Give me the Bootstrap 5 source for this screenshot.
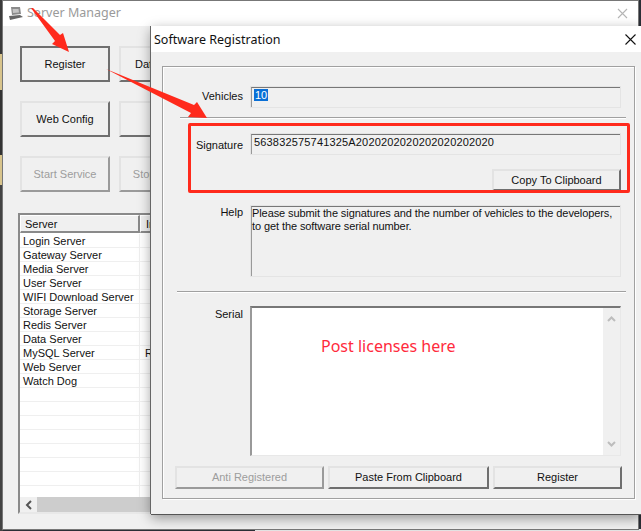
<!DOCTYPE html>
<html><head><meta charset="utf-8">
<link href="https://cdn.jsdelivr.net/npm/bootstrap@5.3.0/dist/css/bootstrap.min.css" rel="stylesheet">
<style>
html,body{margin:0;height:100%;overflow:hidden}
body{background:#2b2f36;font-family:"Liberation Sans",sans-serif;font-size:11px;color:#111}
.desk{position:relative;width:641px;height:531px;overflow:hidden}
.strip{position:absolute;left:0;top:0;width:3px;height:531px;background:linear-gradient(#3a3a3a 0 54px,#d8c48c 54px 90px,#333 90px 155px,#d8c48c 155px 185px,#444 185px 531px)}
.btmlight{position:absolute;left:255px;right:0;bottom:0;height:2px;background:#e4e4e4}
.mainwin{position:absolute;left:3px;top:1px;width:635px;height:528px;background:#f0f0f0;box-shadow:0 0 0 1px #777}
.tbar{height:25px;background:#fff;display:flex;align-items:center;padding:0 0 2px 24px;font:12.5px "Noto Sans",sans-serif;color:#9a9a9a}
.tbar .ico{position:absolute;left:5px;top:6px}
.tbar .cls{position:absolute;right:9px;top:6px}
.mainbody{padding:20px 0 0 17px}
.brow{display:flex;gap:9px;margin-bottom:19px}
.wb.btn{--bs-btn-padding-x:0;--bs-btn-padding-y:0;--bs-btn-font-size:11px;--bs-btn-line-height:1;--bs-btn-border-radius:0;--bs-btn-color:#111;--bs-btn-disabled-color:#9d9d9d;--bs-btn-disabled-opacity:1;background:#f0f0f0;border:0;border-top:2px solid #e3e3e3;border-left:2px solid #e3e3e3;border-right:2px solid #6f6f6f;border-bottom:2px solid #6f6f6f;font-family:"Liberation Sans",sans-serif;display:flex;align-items:center;justify-content:center}
.big{width:90px;height:36px}
.big.on{border-color:#6f6f6f!important}
.dis{border-right-color:#9a9a9a!important;border-bottom-color:#9a9a9a!important}
.lst{margin:21px 0 0 -2px;width:614px;height:301px;border:2px solid #8a8a8a;border-right-color:#e8e8e8;border-bottom-color:#e8e8e8;background:#fff;display:flex;flex-direction:column;overflow:hidden}
.lhead{display:flex;height:18px;background:#f0f0f0;flex:none}
.lhead span{display:block;padding:2px 0 0 4px;border-right:2px solid #8a8a8a;border-bottom:2px solid #8a8a8a;border-top:1px solid #fff;border-left:1px solid #fff;width:120px;line-height:13px}
.lhead span+span{width:60px;padding-left:5px}
.lhead em{flex:1;display:block;border-bottom:2px solid #8a8a8a}
.lrows{flex:1;padding-top:1px;overflow:hidden}
.lr{height:14px;line-height:15px;border-bottom:1px solid #efefef;display:flex;padding-left:3px}
.lr b{font-weight:400;width:117px;border-right:1px solid #efefef;margin-right:5px;white-space:nowrap;flex:none}
.hsb{height:15px;background:#f0f0f0;flex:none;display:flex;align-items:center}
.hsb i{display:block;width:17px;text-align:center;font-style:normal;line-height:0}
.hsb u{display:block;height:15px;width:300px;background:#cdcdcd}
.dlg{position:absolute;left:151px;top:26px;width:490px;height:488px;background:#f0f0f0;box-shadow:-1px 0 0 #666,0 1px 0 #555,0 4px 12px rgba(0,0,0,.4)}
.dtitle{height:26px;background:#fff;display:flex;align-items:center;padding-left:3px;font:12.5px "Noto Sans",sans-serif;color:#111}
.dtitle svg{position:absolute;right:4px;top:7px}
.frame{position:absolute;left:11px;top:40px;width:473px;height:433px;border:1px solid #a0a0a0;box-shadow:inset 1px 1px 0 #fff,1px 1px 0 #fff}
.frow{display:flex}
.lab{width:80px;text-align:right;flex:none;line-height:13px}
.fld{margin-left:7px;background:#f0f0f0;border-top:2px solid #777;border-left:2px solid #999;border-right:1px solid #fff;border-bottom:1px solid #fff;outline:1px solid #e4e4e4;outline-offset:-1px;line-height:13px;padding:1px 0 0 2px;width:371px;height:22px}
.fld.hlp{height:72px;padding:0;letter-spacing:-.09px}
.sig{letter-spacing:.17px}
.sel{background:#0a6fd6;color:#fff;padding:0 1px}
.sep{height:1px;background:#a0a0a0;box-shadow:0 1px 0 #fff}
.serial{margin-left:7px;width:371px;height:150px;background:#fff;border-top:2px solid #777;border-left:2px solid #999;border-right:1px solid #e8e8e8;border-bottom:1px solid #e8e8e8;display:flex}
.vsb{margin-left:auto;width:17px;background:#f0f0f0;display:flex;flex-direction:column;justify-content:space-between;align-items:center;padding:8px 0}
.redbox{position:absolute;left:188px;top:123px;width:442px;height:70px;border:3px solid #ff2a1c;border-radius:2px;pointer-events:none}
.post{position:absolute;left:321px;top:334px;font:16px/24px "Noto Sans",sans-serif;color:#ff2a3c;white-space:nowrap}
.arrows{position:absolute;left:0;top:0;pointer-events:none}
</style></head>
<body>
<div class="desk">
  <div class="strip"></div>
  <div class="btmlight"></div>
  <div class="mainwin">
    <div class="tbar">
      <svg class="ico" width="15" height="14" viewBox="0 0 15 14"><path d="M3 0h9l1 7-9 1z" fill="#8a8a8a"/><path d="M4.5 2h6l.5 3.5-6 .5z" fill="#c4c4c4"/><path d="M1 9l11-1 3 2-13 3z" fill="#666"/></svg>
      <span>Server Manager</span>
      <svg class="cls" width="13" height="13" viewBox="0 0 13 13"><path d="M2 2l9 9M11 2l-9 9" stroke="#b5b5b5" stroke-width="1.1"/></svg>
    </div>
    <div class="mainbody">
      <div class="brow"><button class="btn wb big on">Register</button><button class="btn wb big">Data Config</button></div>
      <div class="brow"><button class="btn wb big">Web Config</button><button class="btn wb big"></button></div>
      <div class="brow"><button class="btn wb big dis" disabled>Start Service</button><button class="btn wb big dis" disabled>Stop Service</button></div>
      <div class="lst">
        <div class="lhead"><span>Server</span><span>Info</span><em></em></div>
        <div class="lrows">
          <div class="lr"><b>Login Server</b></div>
          <div class="lr"><b>Gateway Server</b></div>
          <div class="lr"><b>Media Server</b></div>
          <div class="lr"><b>User Server</b></div>
          <div class="lr"><b>WIFI Download Server</b></div>
          <div class="lr"><b>Storage Server</b></div>
          <div class="lr"><b>Redis Server</b></div>
          <div class="lr"><b>Data Server</b></div>
          <div class="lr"><b>MySQL Server</b>Running</div>
          <div class="lr"><b>Web Server</b></div>
          <div class="lr"><b>Watch Dog</b></div>
          <div class="lr"><b></b></div><div class="lr"><b></b></div><div class="lr"><b></b></div><div class="lr"><b></b></div><div class="lr"><b></b></div><div class="lr"><b></b></div><div class="lr"><b></b></div><div class="lr"><b></b></div>
        </div>
        <div class="hsb"><i><svg width="8" height="10" viewBox="0 0 8 10"><path d="M6 1L2 5l4 4" fill="none" stroke="#555" stroke-width="2"/></svg></i><u></u></div>
      </div>
    </div>
  </div>
  <div class="dlg">
    <div class="dtitle"><span>Software Registration</span>
      <svg width="13" height="13" viewBox="0 0 13 13"><path d="M1.5 1.5l10 10M11.5 1.5l-10 10" stroke="#111" stroke-width="1.1"/></svg>
    </div>
    <div class="frame">
      <div class="frow" style="margin-top:19px"><div class="lab pt-1">Vehicles</div><div class="fld"><span class="sel">10</span></div></div>
      <div class="sep" style="margin:9px 8px 0 17px"></div>
      <div class="frow" style="margin-top:15px"><div class="lab" style="padding-top:6px">Signature</div><div class="fld sig">563832575741325A2020202020202020202020</div></div>
      <div class="d-flex justify-content-end" style="margin:14px 13px 0 0"><button class="btn wb" style="width:129px;height:22px">Copy To Clipboard</button></div>
      <div class="frow" style="margin-top:14px"><div class="lab" style="padding-top:1px">Help</div><div class="fld hlp">Please submit the signatures and the number of vehicles to the developers,<br>to get the software serial number.</div></div>
      <div class="sep" style="margin:14px 8px 0 14px"></div>
      <div class="frow" style="margin-top:14px"><div class="lab" style="padding-top:2px">Serial</div><div class="serial"><div class="vsb"><svg width="9" height="6" viewBox="0 0 9 6"><path d="M1 5l3.5-3.5L8 5" fill="none" stroke="#bdbdbd" stroke-width="2"/></svg><svg width="9" height="6" viewBox="0 0 9 6"><path d="M1 1l3.5 3.5L8 1" fill="none" stroke="#bdbdbd" stroke-width="2"/></svg></div></div></div>
      <div class="d-flex" style="margin:10px 0 0 12px;gap:4px">
        <button class="btn wb dis" style="width:149px;height:23px" disabled>Anti Registered</button>
        <button class="btn wb" style="width:161px;height:23px">Paste From Clipboard</button>
        <button class="btn wb" style="width:129px;height:23px">Register</button>
      </div>
    </div>
  </div>
  <div class="redbox"></div>
  <div class="post">Post licenses here</div>
  <svg class="arrows" width="641" height="531" viewBox="0 0 641 531">
    <polygon points="31,8 33,8 60,35 63,33 69,52 52,44 55,41" fill="#ff2a1c"/>
    <polygon points="106,69 194,105 197,102 207,118 188,117 191,113" fill="#ff2a1c"/>
  </svg>
</div>
<script src="https://cdn.jsdelivr.net/npm/bootstrap@5.3.0/dist/js/bootstrap.bundle.min.js"></script>
</body></html>
